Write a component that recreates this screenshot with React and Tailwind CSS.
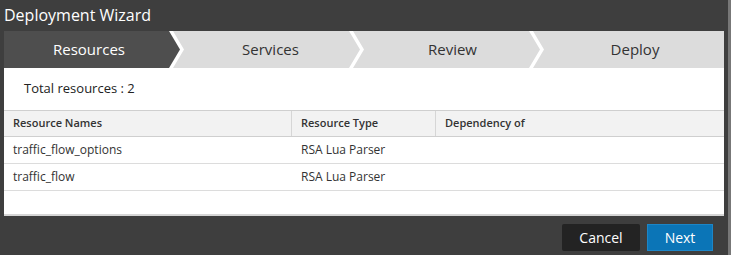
export default function App() {
  const font = { fontFamily: '"Open Sans", "Liberation Sans", sans-serif' };
  return (
    <div className="w-[731px] h-[255px] flex bg-[#3e3e3e] overflow-hidden" style={font}>
      <div className="w-[728px] h-full flex flex-col">
        <div className="h-[31px] pl-[4px] flex items-center text-[16px] text-white leading-none pb-[2px]">
          Deployment Wizard
        </div>
        <div className="ml-[4px] w-[720px] flex flex-col">
          <div className="h-[37px] flex bg-white">
            <div className="w-[180px] shrink-0 bg-[#4e4e4e] text-white flex items-center justify-center pr-[10px] text-[15px] [clip-path:polygon(0_0,165px_0,176px_50%,165px_100%,0_100%)]">
              Resources
            </div>
            <div className="w-[191px] shrink-0 -ml-[11px] bg-[#dcdcdc] text-[#333] flex items-center justify-center pl-[15px] pr-[11px] text-[15px] [clip-path:polygon(0_0,176px_0,187px_50%,176px_100%,0_100%,11px_50%)]">
              Services
            </div>
            <div className="w-[191px] shrink-0 -ml-[11px] bg-[#dcdcdc] text-[#333] flex items-center justify-center pl-[17px] pr-[9px] text-[15px] [clip-path:polygon(0_0,176px_0,187px_50%,176px_100%,0_100%,11px_50%)]">
              Review
            </div>
            <div className="w-[191px] shrink-0 -ml-[11px] bg-[#dcdcdc] text-[#333] flex items-center justify-center pl-[13px] text-[15px] [clip-path:polygon(0_0,100%_0,100%_100%,0_100%,11px_50%)]">
              Deploy
            </div>
          </div>
          <div className="h-[148px] bg-white flex flex-col">
            <div className="h-[42px] pl-[20px] flex items-center text-[13px] text-[#222]">Total resources : 2</div>
            <div className="border-t border-[#cfcfcf] h-[27px] bg-[#f2f2f2] flex text-[11px] font-semibold text-[#333] border-b">
              <div className="w-[288px] pl-[9px] flex items-center border-r border-[#d6d6d6]">Resource Names</div>
              <div className="w-[144px] pl-[9px] flex items-center border-r border-[#d6d6d6]">Resource Type</div>
              <div className="flex-1 pl-[9px] flex items-center">Dependency of</div>
            </div>
            <div className="h-[27px] flex text-[12px] text-[#333] border-b border-[#dcdcdc]">
              <div className="w-[288px] pl-[9px] flex items-center">traffic_flow_options</div>
              <div className="w-[144px] pl-[9px] flex items-center">RSA Lua Parser</div>
              <div className="flex-1"></div>
            </div>
            <div className="h-[27px] flex text-[12px] text-[#333] border-b border-[#dcdcdc]">
              <div className="w-[288px] pl-[9px] flex items-center">traffic_flow</div>
              <div className="w-[144px] pl-[9px] flex items-center">RSA Lua Parser</div>
              <div className="flex-1"></div>
            </div>
            <div className="flex-1 border-b-2 border-[#d6d6d6]"></div>
          </div>
        </div>
        <div className="flex justify-end gap-[7px] pr-[15px] pt-[8px]">
          <button className="w-[78px] h-[27px] rounded-[2px] bg-[#232323] text-white text-[14px] flex items-center justify-center">Cancel</button>
          <button className="w-[66px] h-[27px] bg-[#0b75b7] border border-[#1c86c7] text-white text-[14px] flex items-center justify-center">Next</button>
        </div>
      </div>
      <div className="w-[3px] h-full bg-[#777]"></div>
    </div>
  );
}
